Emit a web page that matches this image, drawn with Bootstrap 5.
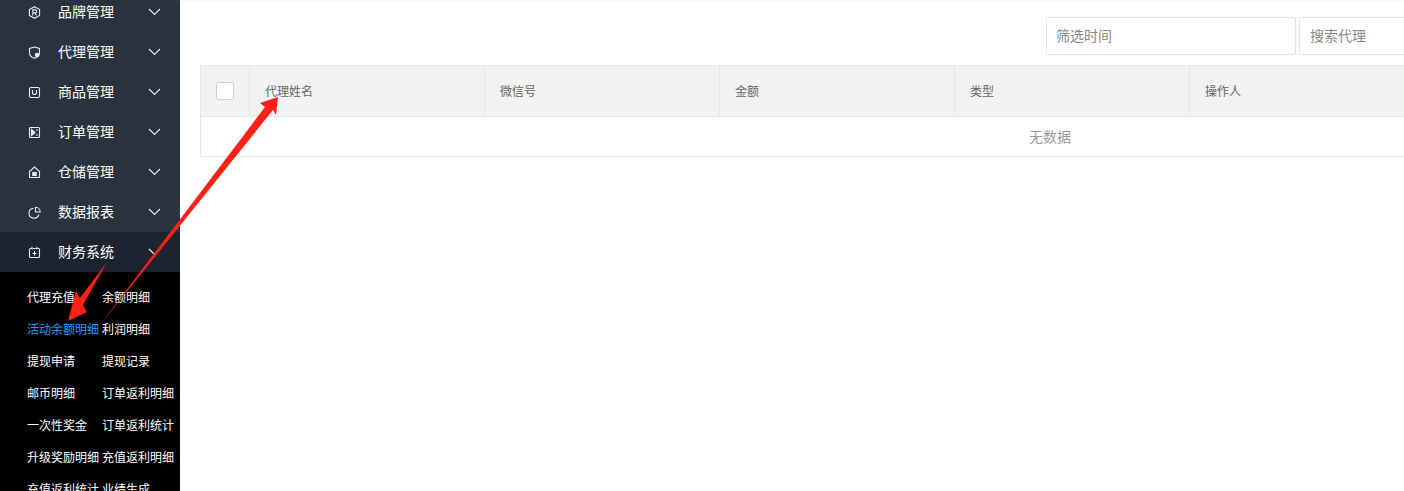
<!DOCTYPE html>
<html lang="en">
<head>
    <meta charset="UTF-8" />
    <meta name="viewport" content="width=device-width, initial-scale=1.0"/>
    <title>活动余额明细</title>
    <link href="https://cdn.jsdelivr.net/npm/bootstrap@5.3.3/dist/css/bootstrap.min.css" rel="stylesheet"/>
    <style>
        html, body { height: 491px; overflow: hidden; background: #fff; }
        body { font-family: "Liberation Sans", "Noto Sans CJK SC", sans-serif; font-size: 13px; color: #666; }
        .page-wrap { height: 491px; width: 1404px; overflow: hidden; position: relative; }
        .side-menu { width: 180px; height: 491px; overflow: hidden; background: #28333e; flex: none; }
        .side-scroll { margin-top: -8px; }
        .menu-row { height: 40px; padding: 0 19px 0 28px; color: #fff; font-size: 14px; }
        .menu-row svg.menu-icon { width: 13px; height: 13px; margin-right: 17px; flex: none; }
        .menu-row .menu-label { flex: 1; }
        .menu-row.is-open { background: #1d2430; }
        .sub-grid { background: #000; display: grid; grid-template-columns: 75px 1fr; grid-auto-rows: 32px; padding: 10px 0 0 27px; }
        .sub-grid a { line-height: 32px; font-size: 12px; color: #fff; text-decoration: none; white-space: nowrap; }
        .sub-grid a.is-active { color: #1e9fff; }
        .main-area { flex: 1; min-width: 0; background: linear-gradient(#f4f7fb, #fff 3px); padding: 17px 0 0 20px; }
        .filter-bar { height: 38px; margin-bottom: 10px; margin-right: -105px; gap: 3px; }
        .filter-input { height: 38px; border: 1px solid #e6e6e6; border-radius: 2px; padding: 0 9px; font-size: 14px; color: #888; line-height: 36px; background: #fff; }
        .filter-date { width: 250px; }
        .filter-agent { width: 210px; padding-left: 10px; }
        .data-grid { width: 1700px; border-collapse: collapse; table-layout: fixed; }
        .data-grid th, .data-grid td { border: 1px solid #e6e6e6; font-weight: 400; }
        .data-grid th { background: #f2f2f2; width: 235px; height: 51px; padding: 1px 15px 0; color: #666; font-size: 12px; }
        .data-grid th.check-cell { width: 49px; padding: 0 15px; }
        .data-grid th.rest-cell { width: auto; }
        .data-grid td { height: 40px; padding-top: 2px; text-align: center; color: #999; font-size: 14px; }
        .fake-check { display: block; width: 18px; height: 18px; background: #fff; border: 1px solid #d2d2d2; border-radius: 2px; }
        .arrow-layer { position: absolute; left: 0; top: 0; width: 1404px; height: 491px; pointer-events: none; }
    </style>
</head>
<body>
<div class="page-wrap d-flex">

    <!-- Sidebar -->
    <div class="side-menu">
        <div class="side-scroll">
            <div class="menu-row d-flex align-items-center">
                <svg class="menu-icon" viewBox="0 0 13 13" fill="none" stroke="#e6ecf1" stroke-width="1.1"><path d="M6.5 .7 11.6 3.6V9.4L6.5 12.3 1.4 9.4V3.6Z"/><path d="M4.8 9.4V3.9H7.2a1.5 1.5 0 0 1 0 3H4.8M7 6.9 8.5 9.4"/></svg>
                <span class="menu-label">品牌管理</span>
                <svg width="13" height="8" viewBox="0 0 13 8" fill="none" stroke="#e6edf2" stroke-width="1.2"><path d="M1 1 6.5 6.5 12 1"/></svg>
            </div>
            <div class="menu-row d-flex align-items-center">
                <svg class="menu-icon" viewBox="0 0 13 13" fill="none" stroke="#e6ecf1" stroke-width="1.1"><path d="M6.5 1 11.5 2.5V6.5C11.5 9.5 9 11.5 6.5 12.3 4 11.5 1.5 9.5 1.5 6.5V2.5Z"/><circle cx="9" cy="9" r="1.7" fill="#e6ecf1"/></svg>
                <span class="menu-label">代理管理</span>
                <svg width="13" height="8" viewBox="0 0 13 8" fill="none" stroke="#e6edf2" stroke-width="1.2"><path d="M1 1 6.5 6.5 12 1"/></svg>
            </div>
            <div class="menu-row d-flex align-items-center">
                <svg class="menu-icon" viewBox="0 0 13 13" fill="none" stroke="#e6ecf1" stroke-width="1.1"><rect x="1.5" y="1.5" width="10" height="10" rx="1.5"/><path d="M4.5 4V6.5A2 2 0 0 0 8.5 6.5V4"/></svg>
                <span class="menu-label">商品管理</span>
                <svg width="13" height="8" viewBox="0 0 13 8" fill="none" stroke="#e6edf2" stroke-width="1.2"><path d="M1 1 6.5 6.5 12 1"/></svg>
            </div>
            <div class="menu-row d-flex align-items-center">
                <svg class="menu-icon" viewBox="0 0 13 13" fill="none" stroke="#e6ecf1" stroke-width="1.1"><rect x="1.5" y="1.5" width="10" height="10" rx="1"/><path d="M3.5 3.5 7 6.5 3.5 9.5Z" fill="#e6ecf1"/><path d="M8 4H10M8 9H10"/></svg>
                <span class="menu-label">订单管理</span>
                <svg width="13" height="8" viewBox="0 0 13 8" fill="none" stroke="#e6edf2" stroke-width="1.2"><path d="M1 1 6.5 6.5 12 1"/></svg>
            </div>
            <div class="menu-row d-flex align-items-center">
                <svg class="menu-icon" viewBox="0 0 13 13" fill="none" stroke="#e6ecf1" stroke-width="1.1"><path d="M1.5 5.5 6.5 1 11.5 5.5V11.5H1.5Z"/><rect x="4.8" y="6.5" width="3.4" height="3" fill="#e6ecf1"/></svg>
                <span class="menu-label">仓储管理</span>
                <svg width="13" height="8" viewBox="0 0 13 8" fill="none" stroke="#e6edf2" stroke-width="1.2"><path d="M1 1 6.5 6.5 12 1"/></svg>
            </div>
            <div class="menu-row d-flex align-items-center">
                <svg class="menu-icon" viewBox="0 0 13 13" fill="none" stroke="#e6ecf1" stroke-width="1.1"><path d="M5.5 2.2A5 5 0 1 0 10.8 8.5"/><path d="M7.5 1.2V6H12.2A4.8 4.8 0 0 0 7.5 1.2Z"/></svg>
                <span class="menu-label">数据报表</span>
                <svg width="13" height="8" viewBox="0 0 13 8" fill="none" stroke="#e6edf2" stroke-width="1.2"><path d="M1 1 6.5 6.5 12 1"/></svg>
            </div>
            <div class="menu-row is-open d-flex align-items-center">
                <svg class="menu-icon" viewBox="0 0 13 13" fill="none" stroke="#e6ecf1" stroke-width="1.1"><rect x="1.5" y="2.5" width="10" height="9" rx="1"/><path d="M4 .8V3M9 .8V3M6.5 5V9.5M4.5 7.5H8.5"/></svg>
                <span class="menu-label">财务系统</span>
                <svg width="13" height="8" viewBox="0 0 13 8" fill="none" stroke="#e6edf2" stroke-width="1.2"><path d="M1 1 6.5 6.5 12 1"/></svg>
            </div>
            <div class="sub-grid">
                <a href="#">代理充值</a><a href="#">余额明细</a>
                <a href="#" class="is-active">活动余额明细</a><a href="#">利润明细</a>
                <a href="#">提现申请</a><a href="#">提现记录</a>
                <a href="#">邮币明细</a><a href="#">订单返利明细</a>
                <a href="#">一次性奖金</a><a href="#">订单返利统计</a>
                <a href="#">升级奖励明细</a><a href="#">充值返利明细</a>
                <a href="#">充值返利统计</a><a href="#">业绩生成</a>
            </div>
        </div>
    </div>

    <!-- Main -->
    <div class="main-area">
        <div class="filter-bar d-flex justify-content-end">
            <div class="filter-input filter-date">筛选时间</div>
            <div class="filter-input filter-agent">搜索代理</div>
        </div>
        <table class="data-grid">
            <thead>
            <tr>
                <th class="check-cell"><span class="fake-check"></span></th>
                <th>代理姓名</th>
                <th>微信号</th>
                <th>金额</th>
                <th>类型</th>
                <th>操作人</th>
                <th></th>
                <th class="rest-cell"></th>
            </tr>
            </thead>
            <tbody>
            <tr><td colspan="8">无数据</td></tr>
            </tbody>
        </table>
    </div>

    <!-- Annotation arrows drawn over the screenshot -->
    <svg class="arrow-layer" viewBox="0 0 1404 491">
        <path d="M107 262 80 298 76 291 68 321 87 312 83 305 Z" fill="#fb2117"/>
        <path d="M100 325 265 107 260 103 278 97 276 115 273 110 Z" fill="#fb2117"/>
    </svg>
</div>
</body>
</html>
